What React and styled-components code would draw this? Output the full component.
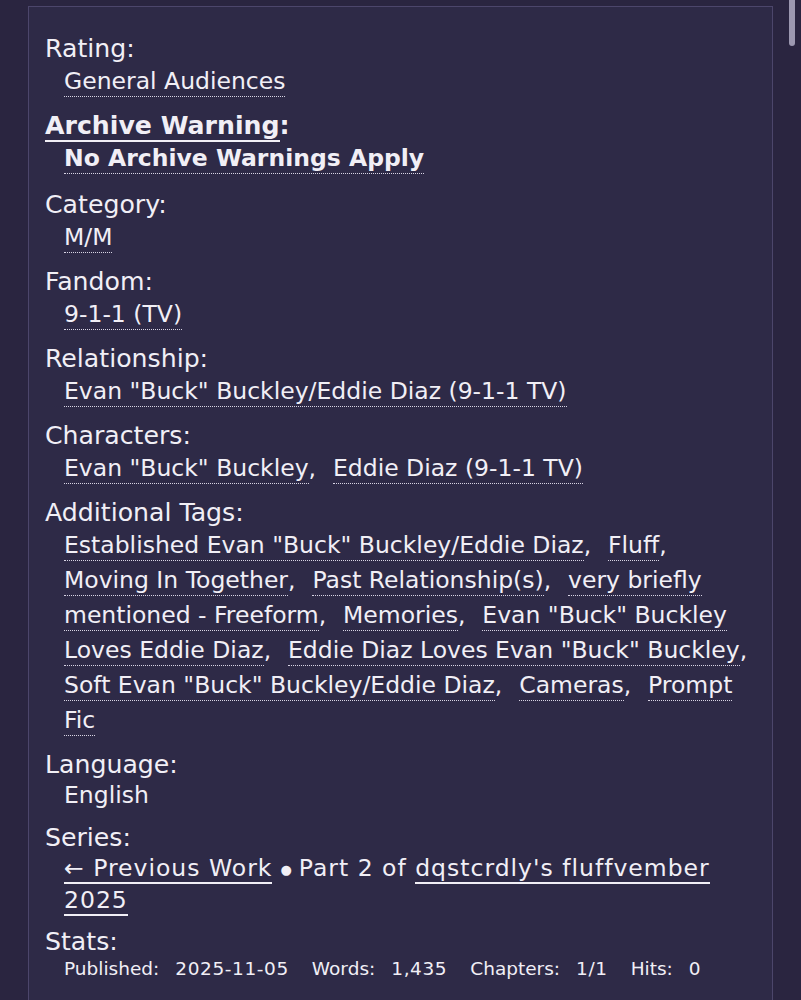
import React from 'react'
import styled, { createGlobalStyle } from 'styled-components'

const GlobalStyle = createGlobalStyle`
  html, body {
    margin: 0;
    padding: 0;
    background: #2a2540;
    overflow: hidden;
  }
  body {
    font-family: "DejaVu Sans", Verdana, sans-serif;
    color: #f1eff6;
  }
`

const Page = styled.div`
  height: 1000px;
  padding: 6px 28px 0 28px;
  box-sizing: border-box;
`

const Panel = styled.div`
  height: 100%;
  box-sizing: border-box;
  background: #2e2a47;
  border: 1px solid #4c466b;
  border-bottom: none;
  padding: 27px 16px 0 16px;
`

const Meta = styled.dl`
  margin: 0;
`

const Label = styled.dt`
  font-size: 25.2px;
  line-height: 30px;
  font-weight: ${p => (p.bold ? 700 : 400)};
`

const LabelLink = styled.span`
  border-bottom: 2px solid #f1eff6;
`

const Value = styled.dd`
  margin: 0 0 ${p => (p.bold ? 14 : 12)}px 0;
  padding-left: 19px;
  font-size: 23.5px;
  line-height: 31px;
  font-weight: ${p => (p.bold ? 700 : 400)};
`

const SeriesValue = styled(Value)`
  line-height: 30px;
  letter-spacing: 1px;
`

const Tags = styled.ul`
  display: block;
  margin: 0;
  padding: 0;
  list-style: none;
  line-height: 35px;
`

const TagItem = styled.li`
  display: inline;
`

// the space between two tags is wider than a normal word space
const Gap = styled.span`
  word-spacing: 0.4em;
`

const TagLink = styled.span`
  border-bottom: 1px dotted #d8d4e4;
  padding-bottom: 1px;
`

const SeriesLink = styled.span`
  border-bottom: 2px solid #f1eff6;
`

const Bullet = styled.span`
  font-size: 13px;
  margin: 0 6px 0 8px;
  vertical-align: 2px;
`

const StatsRow = styled.dl`
  margin: 0;
  padding-left: 19px;
  font-size: 18.5px;
  line-height: 24px;
  display: flex;
  flex-wrap: wrap;
`

const StatName = styled.dt`
  margin-right: 16px;
`

const StatValue = styled.dd`
  margin: 0 23px 0 0;
  letter-spacing: 0.6px;
`

const Thumb = styled.div`
  position: fixed;
  top: 0;
  right: 6px;
  width: 6px;
  height: 46px;
  border-radius: 0 0 3px 3px;
  background: #9c98b0;
`

const TagList = ({ tags }) => (
  <Tags>
    {tags.map((t, i) => (
      <React.Fragment key={t}>
        <TagItem>
          <TagLink>{t}</TagLink>
          {i < tags.length - 1 ? ',' : ''}
        </TagItem>
        {i < tags.length - 1 && <Gap> </Gap>}
      </React.Fragment>
    ))}
  </Tags>
)

const additional = [
  'Established Evan "Buck" Buckley/Eddie Diaz',
  'Fluff',
  'Moving In Together',
  'Past Relationship(s)',
  'very briefly mentioned - Freeform',
  'Memories',
  'Evan "Buck" Buckley Loves Eddie Diaz',
  'Eddie Diaz Loves Evan "Buck" Buckley',
  'Soft Evan "Buck" Buckley/Eddie Diaz',
  'Cameras',
  'Prompt Fic',
]

const stats = [
  ['Published:', '2025-11-05'],
  ['Words:', '1,435'],
  ['Chapters:', '1/1'],
  ['Hits:', '0'],
]

export default function App() {
  return (
    <>
      <GlobalStyle />
      <Page>
        <Panel>
          <Meta>
            <Label>Rating:</Label>
            <Value><TagList tags={['General Audiences']} /></Value>

            <Label bold><LabelLink>Archive Warning</LabelLink>:</Label>
            <Value bold><TagList tags={['No Archive Warnings Apply']} /></Value>

            <Label>Category:</Label>
            <Value><TagList tags={['M/M']} /></Value>

            <Label>Fandom:</Label>
            <Value><TagList tags={['9-1-1 (TV)']} /></Value>

            <Label>Relationship:</Label>
            <Value><TagList tags={['Evan "Buck" Buckley/Eddie Diaz (9-1-1 TV)']} /></Value>

            <Label>Characters:</Label>
            <Value><TagList tags={['Evan "Buck" Buckley', 'Eddie Diaz (9-1-1 TV)']} /></Value>

            <Label>Additional Tags:</Label>
            <Value><TagList tags={additional} /></Value>

            <Label>Language:</Label>
            <Value>English</Value>

            <Label>Series:</Label>
            <SeriesValue>
              <SeriesLink>← Previous Work</SeriesLink>
              <Bullet>●</Bullet>Part 2 of <SeriesLink>dqstcrdly's fluffvember 2025</SeriesLink>
            </SeriesValue>

            <Label>Stats:</Label>
            <dd style={{ margin: 0 }}>
              <StatsRow>
                {stats.map(([k, v]) => (
                  <React.Fragment key={k}>
                    <StatName>{k}</StatName>
                    <StatValue>{v}</StatValue>
                  </React.Fragment>
                ))}
              </StatsRow>
            </dd>
          </Meta>
        </Panel>
      </Page>
      <Thumb />
    </>
  )
}
